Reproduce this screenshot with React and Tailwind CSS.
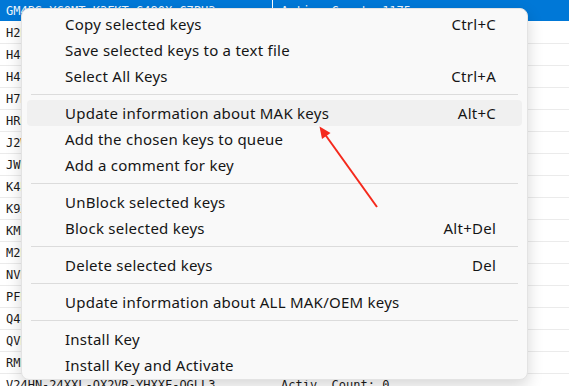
import React from 'react';

const rows = [
  ['GM4BS-YCQMT-K3FKT-G48QX-G7PH3', 'Activ. Count: 1175'],
  ['H2NRD-8QWKT-7XJ4B-FD9TY-MR3CP', 'Activ. Count: 12'],
  ['H4K9N-JBW7T-RQ2XV-3CMDY-P68GF', 'Activ. Count: 3'],
  ['H4YPN-7TKVQ-B2XFW-GJ8D3-MC9R6', 'Activ. Count: 0'],
  ['H7DNQ-3WBGK-XY4PC-9RMVT-F82JK', 'Activ. Count: 41'],
  ['HRN8T-CXGKP-93DJW-V7YQB-M4F2R', 'Activ. Count: 7'],
  ['J2WBN-Q8KXD-YT4RC-MVG73-P9F6H', 'Activ. Count: 0'],
  ['JWN4K-X9CTR-B7GMQ-83DVY-P2FHR', 'Activ. Count: 19'],
  ['K4NQB-3XGWT-J7VR9-DYMPC-8F2KH', 'Activ. Count: 2'],
  ['K9XNB-7QWGT-MCP34-RJDVY-H82F6', 'Activ. Count: 0'],
  ['KMN7T-X4QBW-G9VJR-DY83C-P2FMK', 'Activ. Count: 5'],
  ['M2NXK-8BWQT-R9GV7-CYJ3D-P4FH6', 'Activ. Count: 0'],
  ['NVK3B-9XQWT-7GMRJ-DY4PC-F82HV', 'Activ. Count: 1'],
  ['PFN8K-3QXBW-J7TRV-GDY9C-M4P2H', 'Activ. Count: 0'],
  ['Q4NXB-9KWGT-R7VJM-3DYPC-8F2HQ', 'Activ. Count: 14'],
  ['QVN7K-X3BWT-G9QRJ-DY8MC-P4F2V', 'Activ. Count: 0'],
  ['RMN4B-8XQWT-7KGVJ-3DYPC-F92HR', 'Activ. Count: 6'],
  ['V24HN-24XXL-QX2VR-YHXXF-QGLL3', 'Activ. Count: 0'],
];

const menu = [
  ['Copy selected keys', 'Ctrl+C'],
  ['Save selected keys to a text file', ''],
  ['Select All Keys', 'Ctrl+A'],
  null,
  ['Update information about MAK keys', 'Alt+C', true],
  ['Add the chosen keys to queue', ''],
  ['Add a comment for key', ''],
  null,
  ['UnBlock selected keys', ''],
  ['Block selected keys', 'Alt+Del'],
  null,
  ['Delete selected keys', 'Del'],
  null,
  ['Update information about ALL MAK/OEM keys', ''],
  null,
  ['Install Key', ''],
  ['Install Key and Activate', ''],
];

export default function App() {
  return (
    <div className="relative w-[569px] h-[386px] overflow-hidden bg-white">
      {/* key list behind the menu */}
      <div className="flex flex-col font-['DejaVu_Sans_Mono',monospace] text-[12px]">
        {rows.map(([key, count], i) => (
          <div
            key={key}
            className={`flex h-[22px] shrink-0 border-b ${i === 0 ? 'bg-[#0078d7] text-[#eef5fc] border-white' : 'text-[#1a1a1a] border-[#ebebeb]'}`}
          >
            <div className={`w-[273px] flex items-center pl-[6px] ${i === 0 ? 'border-r border-white' : ''}`}>{key}</div>
            <div className="flex-1 flex items-center pl-[8px]">{count}</div>
          </div>
        ))}
      </div>

      {/* context menu */}
      <div className="absolute left-[21px] top-[8px] w-[507px] bg-[#f9f9f9] border border-[#e3e3e3] rounded-[8px] px-[5px] pt-[2px] pb-[1px] shadow-[0_6px_16px_rgba(0,0,0,0.16)] font-['Noto_Sans',sans-serif] text-[15px] tracking-[0.25px] text-[#151515]">
        {menu.map((item, i) =>
          item ? (
            <div
              key={i}
              className={`flex items-center justify-between h-[26px] pl-[38px] pr-[26px] rounded-[4px] ${item[2] ? 'bg-[#f0f0f0]' : ''}`}
            >
              <span>{item[0]}</span>
              <span>{item[1]}</span>
            </div>
          ) : (
            <div key={i} className="h-[11px] flex items-center mx-[4px]">
              <div className="h-px w-full bg-[#dcdcdc]" />
            </div>
          )
        )}
      </div>

      {/* red annotation arrow */}
      <svg className="absolute left-0 top-0" width="569" height="386" viewBox="0 0 569 386">
        <line x1="377" y1="207" x2="324" y2="133" stroke="#f5291c" strokeWidth="2" />
        <polygon points="319.5,126.5 330.5,133 322,139" fill="#f5291c" />
      </svg>
    </div>
  );
}
